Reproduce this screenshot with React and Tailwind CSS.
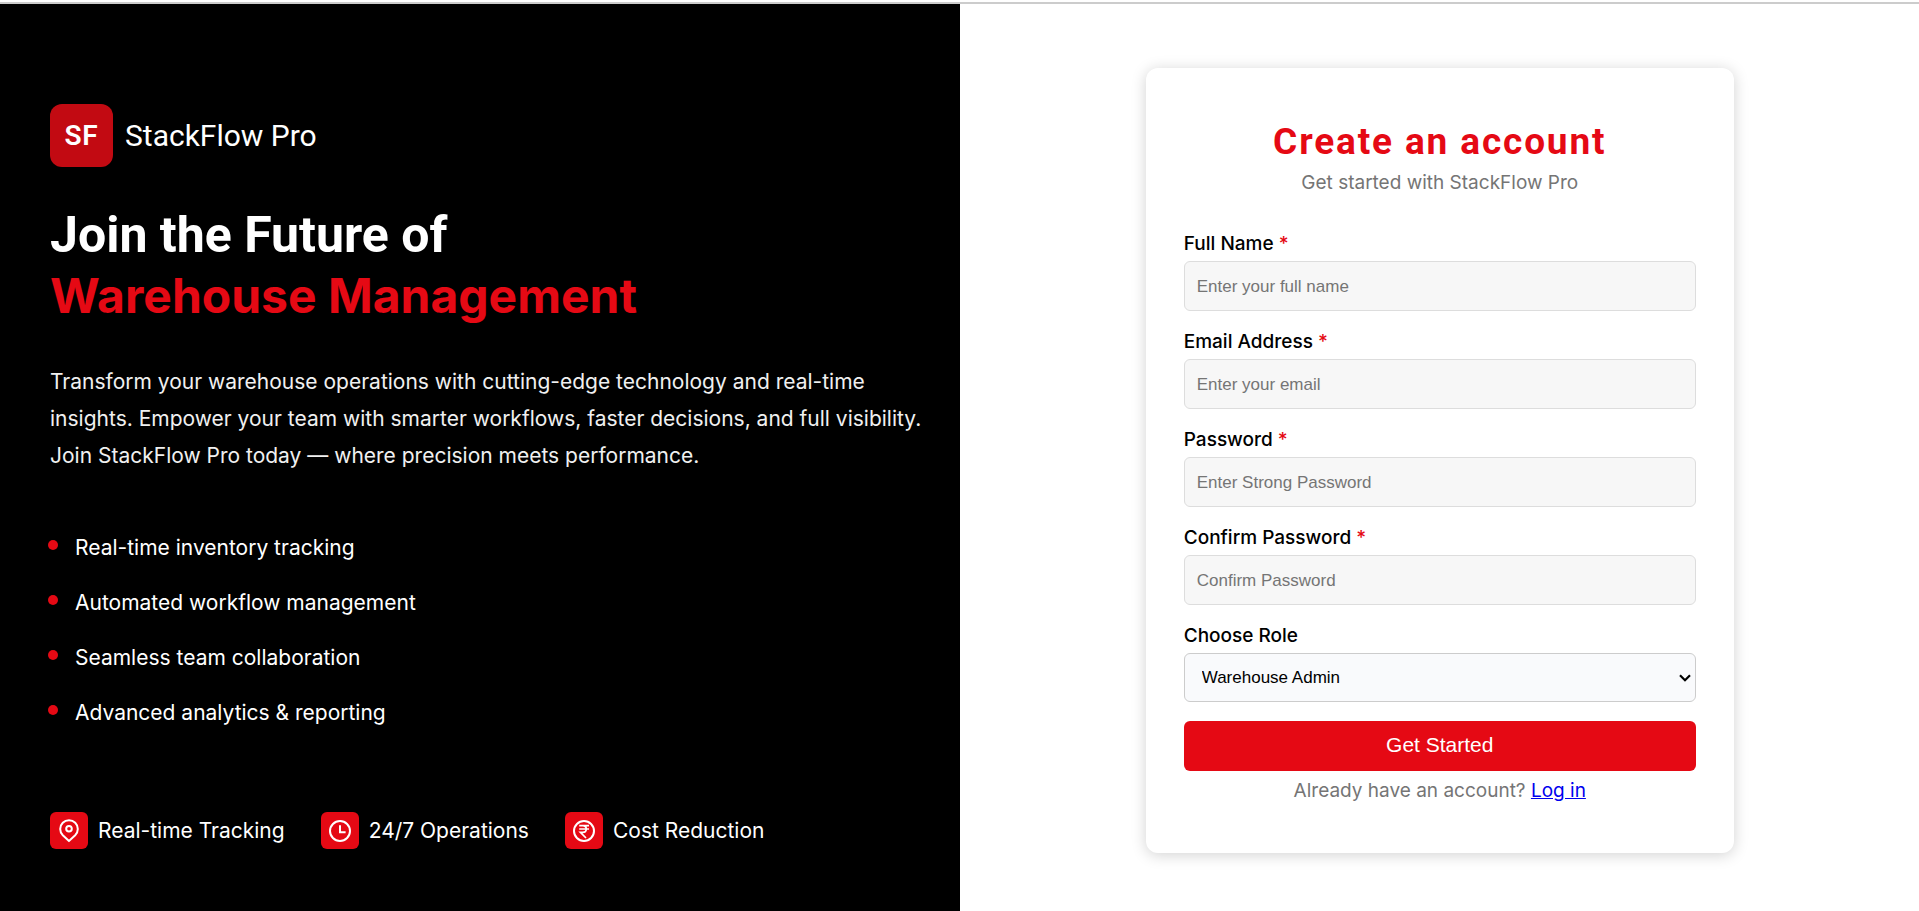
const points = [
  "Real-time inventory tracking",
  "Automated workflow management",
  "Seamless team collaboration",
  "Advanced analytics & reporting",
];

const fields = [
  { id: "name", label: "Full Name", type: "text", placeholder: "Enter your full name" },
  { id: "email", label: "Email Address", type: "email", placeholder: "Enter your email" },
  { id: "password", label: "Password", type: "password", placeholder: "Enter Strong Password" },
  { id: "confirm", label: "Confirm Password", type: "password", placeholder: "Confirm Password" },
];

const svgProps = {
  width: 24,
  height: 24,
  viewBox: "0 0 24 24",
  fill: "none",
  stroke: "currentColor",
  strokeWidth: 2,
  "aria-hidden": true,
};

function PinIcon() {
  return (
    <svg {...svgProps}>
      <path d="M12 22L5.8 16.2A8.8 8.8 0 1 1 18.2 16.2Z" />
      <circle cx="12" cy="9.8" r="2.8" />
    </svg>
  );
}

function ClockIcon() {
  return (
    <svg {...svgProps}>
      <circle cx="12" cy="12" r="10" />
      <path d="M12 6.3V13.2H17.6" />
    </svg>
  );
}

function RupeeIcon() {
  return (
    <svg {...svgProps}>
      <circle cx="12" cy="12" r="10" />
      <path
        d="M7.2 6.7H17M7.2 10H17M8 6.7H10.8C15.4 6.7 15.4 13.4 10.8 13.4H8.4L14 19"
        strokeWidth="1.7"
      />
    </svg>
  );
}

const badges = [
  { label: "Real-time Tracking", Icon: PinIcon },
  { label: "24/7 Operations", Icon: ClockIcon },
  { label: "Cost Reduction", Icon: RupeeIcon },
];

export default function App() {
  return (
    <div className="flex min-h-screen flex-col bg-white font-['Inter',sans-serif]">
      <div className="mt-[2px] h-[2px] bg-[#ccc]" />
      <main className="grid flex-1 grid-cols-2">
        <section className="flex flex-col bg-black pt-[100px] pr-[30px] pl-[50px] text-white">
          <div className="flex items-center gap-3 font-['Roboto',sans-serif]">
            <div className="flex h-[63px] w-[63px] items-center justify-center rounded-xl bg-[#c20a12] text-[28px] font-semibold tracking-wide">
              SF
            </div>
            <span className="text-[30px]">StackFlow Pro</span>
          </div>
          <h1 className="mt-[38px] font-['Roboto',sans-serif] text-[50px] leading-[61px] font-bold">
            Join the Future of
            <span className="block font-['Inter',sans-serif] text-[48px] leading-[59px] text-[#e50914]">
              Warehouse Management
            </span>
          </h1>
          <p className="mt-[38px] text-[21px] leading-[37px] text-[#f0f0f0]">
            Transform your warehouse operations with cutting-edge technology and real-time insights. Empower your team
            with smarter workflows, faster decisions, and full visibility. Join StackFlow Pro today — where precision
            meets performance.
          </p>
          <ul className="mt-[61px] flex flex-col gap-[30px] text-[21px] leading-[25px]">
            {points.map((text) => (
              <li key={text} className="-ml-[2px] flex items-start gap-[17px]">
                <span className="mt-[5px] h-[10px] w-[10px] rounded-full bg-[#e50914]" />
                {text}
              </li>
            ))}
          </ul>
          <div className="mt-[87px] flex gap-[36px]">
            {badges.map(({ label, Icon }) => (
              <div key={label} className="flex items-center gap-[10px] text-[21px] leading-[25px]">
                <span className="flex h-[37px] w-[38px] items-center justify-center rounded-md bg-[#e50914]">
                  <Icon />
                </span>
                {label}
              </div>
            ))}
          </div>
        </section>

        <section className="flex items-start justify-center pt-[64px] pb-[40px] pl-px">
          <form className="w-[588px] rounded-xl bg-white px-[38px] pt-[52px] pb-[51px] shadow-[0_2px_15px_rgba(0,0,0,0.18)]">
            <h2 className="text-center font-['Roboto',sans-serif] text-[37px] leading-[44px] font-bold tracking-wider text-[#e50914]">
              Create an account
            </h2>
            <p className="mt-[8px] text-center text-[19px] leading-[22px] text-[#757575]">
              Get started with StackFlow Pro
            </p>
            <div className="mt-[39px] flex flex-col gap-[20px]">
              {fields.map((f) => (
                <div key={f.id} className="flex flex-col gap-[6px]">
                  <label htmlFor={f.id} className="text-[19px] leading-[22px] font-medium text-black">
                    {f.label} <span className="text-[#e50914]">*</span>
                  </label>
                  <input
                    id={f.id}
                    type={f.type}
                    placeholder={f.placeholder}
                    className="h-[50px] rounded-md border border-[#ddd] bg-[#f7f7f7] px-[12px] pt-[2px] font-['Liberation_Sans',sans-serif] text-[17px] placeholder:text-[#757575]"
                  />
                </div>
              ))}
              <div className="flex flex-col gap-[6px]">
                <label htmlFor="role" className="text-[19px] leading-[22px] font-medium text-black">
                  Choose Role
                </label>
                <div className="relative">
                  <select
                    id="role"
                    className="block h-[49px] w-full appearance-none rounded-md border border-[#ccc] bg-[#f9fafc] px-[17px] font-['Liberation_Sans',sans-serif] text-[17px] text-black"
                  >
                    <option>Warehouse Admin</option>
                  </select>
                  <svg
                    className="pointer-events-none absolute top-[20px] right-[4px]"
                    width="14"
                    height="10"
                    viewBox="0 0 14 10"
                    fill="none"
                    stroke="black"
                    strokeWidth="2.2"
                    aria-hidden="true"
                  >
                    <path d="M2 2.2L7 7.2L12 2.2" />
                  </svg>
                </div>
              </div>
            </div>
            <button
              type="button"
              className="mt-[19px] h-[50px] w-full rounded-md bg-[#e50914] pb-[2px] font-['Liberation_Sans',sans-serif] text-[21px] text-white"
            >
              Get Started
            </button>
            <p className="mt-[9px] text-center text-[19px] leading-[22px] text-[#757575]">
              Already have an account?{" "}
              <a href="#login" className="text-[#0000ee] underline">
                Log in
              </a>
            </p>
          </form>
        </section>
      </main>
    </div>
  );
}
